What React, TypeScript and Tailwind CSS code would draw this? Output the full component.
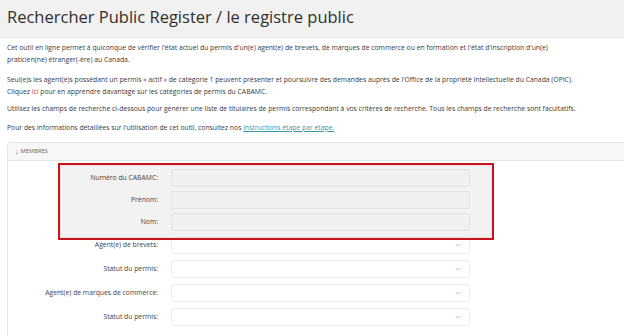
import { ChevronDown } from 'lucide-react';

const textRows = [
  { label: 'Numéro du CABAMC:' },
  { label: 'Prénom:' },
  { label: 'Nom:' },
];

const selectRows = [
  { label: 'Agent(e) de brevets:' },
  { label: 'Statut du permis:' },
  { label: 'Agent(e) de marques de commerce:' },
  { label: 'Statut du permis:' },
];

const App: React.FC = () => {
  return (
    <div className="w-[624px] h-[336px] overflow-hidden bg-white text-[#333] font-['Open_Sans',sans-serif]">
      <div className="h-[38px] bg-[#f1f1f1] px-[7px] pt-[6px] border-b border-[#e8e8e8]">
        <h1 className="text-[16.5px] leading-[22px] text-[#2f2f2f]">Rechercher Public Register / le registre public</h1>
      </div>

      <div className="px-[7px] pt-[4px] text-[6.8px] leading-[11.5px] text-[#3a3a3a]">
        <p className="mb-[9px]">
          Cet outil en ligne permet à quiconque de vérifier l'état actuel du permis d'un(e) agent(e) de brevets, de marques de commerce ou en formation et l'état d'inscription d'un(e)
          <br />
          praticien(ne) étranger(-ère) au Canada.
        </p>
        <p className="mb-[6px]">
          Seul(e)s les agent(e)s possédant un permis « actif » de catégorie 1 peuvent présenter et poursuivre des demandes auprès de l'Office de la propriété intellectuelle du Canada (OPIC).
          <br />
          Cliquez <span className="text-[#d9362f]">ici</span> pour en apprendre davantage sur les catégories de permis du CABAMC.
        </p>
        <p className="mb-[7px]">
          Utilisez les champs de recherche ci-dessous pour générer une liste de titulaires de permis correspondant à vos critères de recherche. Tous les champs de recherche sont facultatifs.
        </p>
        <p>
          Pour des informations détaillées sur l'utilisation de cet outil, consultez nos{' '}
          <span className="text-[#3d93a8] underline">instructions étape par étape.</span>
        </p>
      </div>

      <div className="mt-[9px] ml-[7px] -mr-4 border border-[#e4e4e4] rounded-tl-[3px]">
        <div className="h-[18px] bg-[#f7f7f7] border-b border-[#e4e4e4] flex items-center pl-[7px] text-[5.8px] text-[#666] uppercase gap-[2px]">
          <span className="text-[7px] leading-none">↓</span>
          <span>Membres</span>
        </div>

        <div className="relative pt-[8px] pb-[20px]">
          <div className="absolute left-[50px] top-[2px] w-[436px] h-[77px] bg-[#f2f2f2]" />

          <div className="relative flex flex-col gap-[4px]">
            {textRows.map((row) => (
              <div key={row.label} className="flex items-center">
                <label className="w-[150px] text-right text-[6.8px] text-[#444]">{row.label}</label>
                <div className="ml-[13px] w-[299px] h-[18px] bg-[#f0f0f0] border border-[#e2e2e2] rounded-[3px]" />
              </div>
            ))}
          </div>

          <div className="relative flex flex-col gap-[6px] mt-[5px]">
            {selectRows.map((row, i) => (
              <div key={i} className="flex items-center">
                <label className="w-[150px] text-right text-[6.8px] text-[#444]">{row.label}</label>
                <div className="ml-[13px] w-[299px] h-[18px] bg-white border border-[#ececec] rounded-[3px] flex items-center justify-end pr-[7px]">
                  <ChevronDown size={8} strokeWidth={1.5} className="text-[#888]" />
                </div>
              </div>
            ))}
          </div>

          <div className="absolute left-[50px] top-[2px] w-[436px] h-[77px] border-2 border-[#c4161c] shadow-[inset_0_0_0_1px_#f6dede] pointer-events-none" />
        </div>
      </div>
    </div>
  );
};

export default App;
